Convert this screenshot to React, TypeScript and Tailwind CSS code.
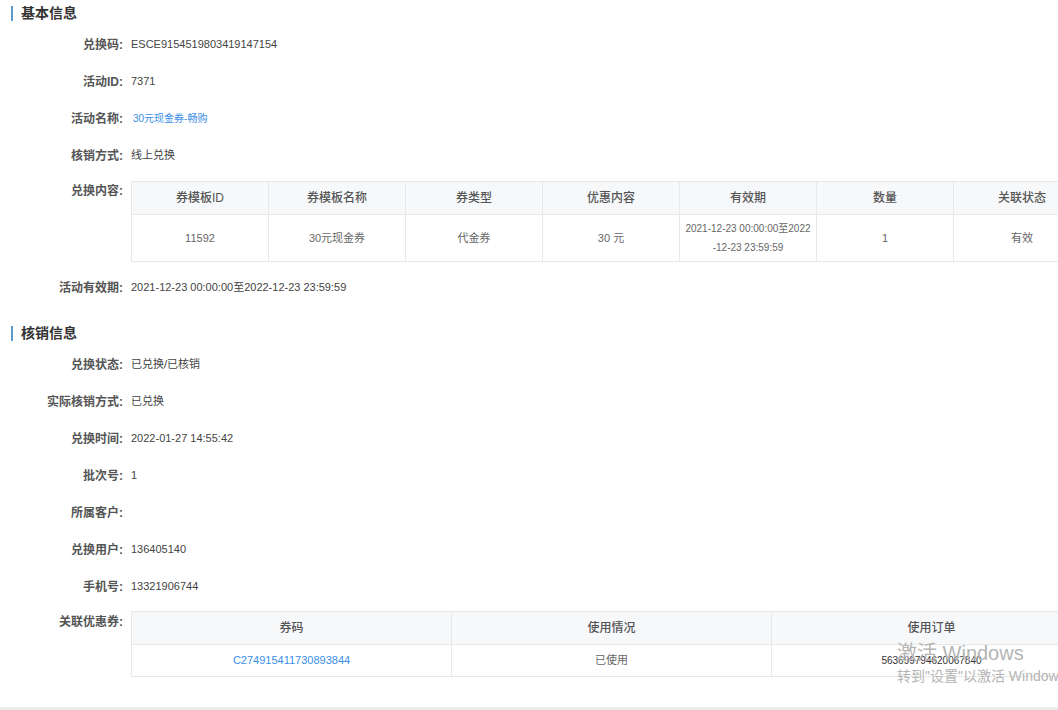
const font = 'font-["Liberation_Sans","Noto_Sans_CJK_SC",sans-serif]';

const labelCls = 'w-[123px] shrink-0 text-right text-[12px] font-semibold text-[#555]';
const valueCls = 'pl-[8px] text-[11px] text-[#444]';
const thCls = 'h-[33px] border-l border-[#e8e8e8] bg-[#f7f8fa] text-center text-[12px] font-medium text-[#555]';
const tdBase = 'border-l border-[#e8e8e8] text-center';
const tdCls = `${tdBase} text-[11px] text-[#666]`;

function SectionTitle({ title, className = '' }: { title: string; className?: string }) {
  return (
    <div className={`flex h-[26px] items-center ${className}`}>
      <span className="ml-[11px] h-[15px] w-[2px] bg-[#5b9bc9]" />
      <span className="ml-[8px] text-[14px] font-bold text-[#333]">{title}</span>
    </div>
  );
}

function Row({ label, children }: { label: string; children?: React.ReactNode }) {
  return (
    <div className="flex h-[37px] items-center">
      <div className={labelCls}>{label}:</div>
      <div className={valueCls}>{children}</div>
    </div>
  );
}

const contentCols = ['券模板ID', '券模板名称', '券类型', '优惠内容', '有效期', '数量', '关联状态'];

function ContentTable() {
  return (
    <table className="w-[959px] table-fixed border-collapse border border-[#e8e8e8]">
      <colgroup>
        {contentCols.map((c) => (
          <col key={c} className="w-[137px]" />
        ))}
      </colgroup>
      <thead>
        <tr className="border-b border-[#e8e8e8]">
          {contentCols.map((c) => (
            <th key={c} className={thCls}>
              {c}
            </th>
          ))}
        </tr>
      </thead>
      <tbody>
        <tr className="h-[47px]">
          <td className={tdCls}>11592</td>
          <td className={tdCls}>30元现金券</td>
          <td className={tdCls}>代金券</td>
          <td className={tdCls}>30 元</td>
          <td className={`${tdBase} text-[10px] leading-[19px] text-[#666]`}>
            <div className="mx-auto w-[126px] break-all">2021-12-23 00:00:00至2022-12-23 23:59:59</div>
          </td>
          <td className={tdCls}>1</td>
          <td className={tdCls}>有效</td>
        </tr>
      </tbody>
    </table>
  );
}

function CouponTable() {
  return (
    <table className="w-[960px] table-fixed border-collapse border border-[#e8e8e8]">
      <colgroup>
        <col className="w-[320px]" />
        <col className="w-[320px]" />
        <col className="w-[320px]" />
      </colgroup>
      <thead>
        <tr className="border-b border-[#e8e8e8]">
          <th className={thCls}>券码</th>
          <th className={thCls}>使用情况</th>
          <th className={thCls}>使用订单</th>
        </tr>
      </thead>
      <tbody>
        <tr className="h-[32px]">
          <td className={`${tdBase} text-[11px] text-[#3a8ee6]`}>C274915411730893844</td>
          <td className={tdCls}>已使用</td>
          <td className={`${tdBase} text-[10px] text-[#333]`}>563699794620067840</td>
        </tr>
      </tbody>
    </table>
  );
}

export default function App() {
  return (
    <div className={`relative flex h-[710px] w-[1058px] flex-col overflow-hidden bg-white ${font}`}>
      <SectionTitle title="基本信息" />
      <Row label="兑换码">ESCE9154519803419147154</Row>
      <Row label="活动ID">7371</Row>
      <Row label="活动名称">
        <span className="pl-[2px] text-[10px] text-[#3a8ee6]">30元现金券-畅购</span>
      </Row>
      <Row label="核销方式">线上兑换</Row>
      <div className="flex py-[7px]">
        <div className={`${labelCls} leading-[20px]`}>兑换内容:</div>
        <div className="pl-[8px]">
          <ContentTable />
        </div>
      </div>
      <Row label="活动有效期">2021-12-23 00:00:00至2022-12-23 23:59:59</Row>

      <SectionTitle title="核销信息" className="mt-[14px]" />
      <Row label="兑换状态">已兑换/已核销</Row>
      <Row label="实际核销方式">已兑换</Row>
      <Row label="兑换时间">2022-01-27 14:55:42</Row>
      <Row label="批次号">1</Row>
      <Row label="所属客户" />
      <Row label="兑换用户">136405140</Row>
      <Row label="手机号">13321906744</Row>
      <div className="flex pt-[6px]">
        <div className={`${labelCls} leading-[22px]`}>关联优惠券:</div>
        <div className="pl-[8px]">
          <CouponTable />
        </div>
      </div>

      <div className="flex-1" />
      <div className="h-[3px] bg-[#ececec]" />

      <div className="pointer-events-none absolute left-[897px] top-[640px] whitespace-nowrap text-[#b4b4b4]">
        <div className="text-[20px] leading-[26px]">激活 Windows</div>
        <div className="text-[14px] leading-[20px]">转到"设置"以激活 Windows</div>
      </div>
    </div>
  );
}
